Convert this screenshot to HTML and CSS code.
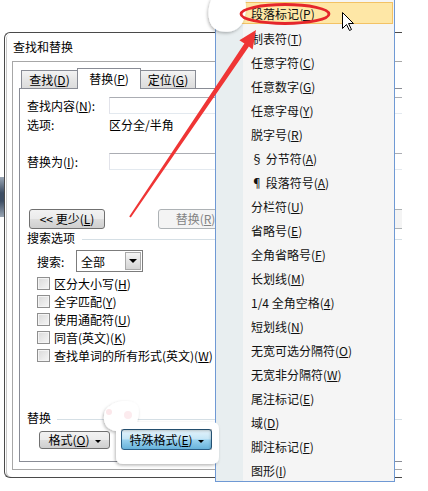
FILE: index.html
```html
<!DOCTYPE html>
<html lang="zh-CN">
<head>
<meta charset="utf-8">
<title>查找和替换</title>
<link rel="stylesheet" href="styles.css">
</head>
<body>
<div class="stage">
  <div class="side-artifact"></div>
  <div class="dialog">
    <div class="titlebar">查找和替换</div>
    <div class="frame">
      <div class="tabs">
        <div class="tab t1">查找(<u>D</u>)</div>
        <div class="tab active">替换(<u>P</u>)</div>
        <div class="tab t3">定位(<u>G</u>)</div>
      </div>
      <div class="panel">
        <div class="row r-find"><span class="lbl">查找内容(<u>N</u>):</span><div class="input"></div></div>
        <div class="row r-opt"><span class="lbl">选项:</span><span>区分全/半角</span></div>
        <div class="row r-repl"><span class="lbl">替换为(<u>I</u>):</span><div class="input"></div></div>
        <div class="btnrow">
          <div class="btn less">&lt;&lt; 更少(<u>L</u>)</div>
          <div class="btn dis b-repl">替换(<u>R</u>)</div>
          <div class="btn dis b-all"></div>
          <div class="btn dis b-next"></div>
        </div>
        <div class="section s-search"><span>搜索选项</span><i class="line"></i></div>
        <div class="search-row">
          <span class="slbl">搜索:</span>
          <div class="select"><span class="sval">全部</span><b class="drop"><i class="tri"></i></b></div>
        </div>
        <div class="checks">
          <div class="chk"><i class="box"></i>区分大小写(<u>H</u>)</div>
          <div class="chk"><i class="box"></i>全字匹配(<u>Y</u>)</div>
          <div class="chk"><i class="box"></i>使用通配符(<u>U</u>)</div>
          <div class="chk"><i class="box"></i>同音(英文)(<u>K</u>)</div>
          <div class="chk"><i class="box"></i>查找单词的所有形式(英文)(<u>W</u>)</div>
        </div>
        <div class="section s-repl"><span>替换</span><i class="line"></i></div>
        <div class="fmt-row">
          <div class="btn fmt">格式(<u>O</u>)<i class="dd"></i></div>
          <div class="btn special">特殊格式(<u>E</u>)<i class="dd"></i></div>
        </div>
      </div>
    </div>
  </div>

  <div class="menu">
    <div class="item hl">段落标记(<u>P</u>)</div>
    <div class="item">制表符(<u>T</u>)</div>
    <div class="item">任意字符(<u>C</u>)</div>
    <div class="item">任意数字(<u>G</u>)</div>
    <div class="item">任意字母(<u>Y</u>)</div>
    <div class="item">脱字号(<u>R</u>)</div>
    <div class="item">§ 分节符(<u>A</u>)</div>
    <div class="item">¶ 段落符号(<u>A</u>)</div>
    <div class="item">分栏符(<u>U</u>)</div>
    <div class="item">省略号(<u>E</u>)</div>
    <div class="item">全角省略号(<u>F</u>)</div>
    <div class="item">长划线(<u>M</u>)</div>
    <div class="item">1/4 全角空格(<u>4</u>)</div>
    <div class="item">短划线(<u>N</u>)</div>
    <div class="item">无宽可选分隔符(<u>O</u>)</div>
    <div class="item">无宽非分隔符(<u>W</u>)</div>
    <div class="item">尾注标记(<u>E</u>)</div>
    <div class="item">域(<u>D</u>)</div>
    <div class="item">脚注标记(<u>F</u>)</div>
    <div class="item">图形(<u>I</u>)</div>
  </div>

  <svg class="annot" width="428" height="491" viewBox="0 0 428 491" xmlns="http://www.w3.org/2000/svg">
    <defs>
      <filter id="sh" x="-30%" y="-30%" width="160%" height="160%">
        <feDropShadow dx="-1" dy="1.5" stdDeviation="1.4" flood-color="#000" flood-opacity="0.28"/>
      </filter>
    </defs>
    <path d="M212,-2 L245,-2 C247,8 246,18 241,25 C235,33 221,34 214,28 C207,22 207,8 212,-2 Z" fill="#fff" filter="url(#sh)"/>
    <path fill-rule="evenodd" fill="#fff" filter="url(#sh)"
      d="M110,406 C116,400 132,399 137,405 C140,409 139,416 137,422 L212,422 Q219,422 219,429 L219,457 Q219,464 212,464 L123,464 Q116,464 116,457 L116,431 C108,430 103,424 104,416 C104,412 106,408 110,406 Z M121,429 L121,450 L212,450 L212,429 Z"/>
    <circle cx="109" cy="412" r="3" fill="#fbe7ea"/>
    <circle cx="128" cy="415" r="4" fill="#fcebee"/>
    <ellipse cx="285" cy="14" rx="44" ry="9.5" fill="none" stroke="#e5262b" stroke-width="2.8"/>
    <polygon fill="#ef3535" points="130.8,217.6 248.9,46.5 252.6,49.6 256,30 239.4,40.3 244.4,43.6 129.2,216.5"/>
    <path d="M342.5,12.5 L342.5,28.5 L346.5,24.5 L349.5,30.5 L351.5,29.5 L348.5,23.5 L353.5,23.5 Z" fill="#fff" stroke="#000" stroke-width="1" stroke-linejoin="round"/>
  </svg>
</div>
</body>
</html>
```

FILE: styles.css
```css
* { box-sizing: border-box; }
html, body { margin: 0; padding: 0; background: #fff; }
body {
  width: 428px;
  height: 491px;
  overflow: hidden;
  font-family: "Noto Sans CJK SC", "Microsoft YaHei", sans-serif;
  font-size: 12px;
  color: #000;
}
u { text-decoration: underline; text-underline-offset: 1px; }

.stage {
  position: relative;
  width: 428px;
  height: 491px;
  padding: 32px 0 0 4px;
}

.side-artifact {
  position: absolute;
  left: 0;
  top: 177px;
  width: 4px;
  height: 40px;
  background: linear-gradient(#9aa6b4, #3d4d63 40%, #3d4d63 60%, #9aa6b4);
}

.dialog {
  width: 398px;
  height: 446px;
  border: 1px solid #4a4a4a;
  border-right: none;
  border-radius: 6px 0 0 6px;
  box-shadow: inset 1px 1px 0 #fff, inset 2px 0 0 #c9c9c9;
  background: #fff;
  overflow: hidden;
  display: flex;
  flex-direction: column;
}
.titlebar {
  height: 28px;
  line-height: 27px;
  padding-left: 8px;
  flex: none;
}
.frame {
  flex: 1;
  width: 430px;
  margin: 0 0 7px 7px;
  border: 1px solid #a7a7a7;
  padding: 0 0 7px 6px;
  display: flex;
  flex-direction: column;
}

.tabs {
  height: 26px;
  flex: none;
  display: flex;
  align-items: flex-end;
  padding-left: 2px;
}
.tab {
  height: 18px;
  border: 1px solid #898c95;
  border-bottom: none;
  background: linear-gradient(#f3f3f3, #e6e6e6 50%, #dcdcdc);
  text-align: center;
  line-height: 17px;
}
.t1 { width: 57px; }
.tab.active {
  position: relative;
  z-index: 2;
  width: 64px;
  height: 21px;
  margin: 0 -1px -1px -1px;
  background: #fff;
  line-height: 19px;
}
.t3 { width: 56px; }

.panel {
  flex: 1;
  border: 1px solid #898c95;
  background: #fff;
  padding: 8px 0 0 7px;
  display: flex;
  flex-direction: column;
}

.row { display: flex; align-items: center; }
.lbl { width: 82px; flex: none; }
.r-find { height: 17px; }
.r-opt { height: 16px; margin-top: 2px; }
.r-repl { height: 17px; margin-top: 21px; }
.input {
  width: 300px;
  height: 17px;
  border: 1px solid;
  border-color: #abadb3 #dbdfe6 #e3e9ef #e2e3ea;
  background: #fff;
}

.btn {
  height: 20px;
  border: 1px solid #707070;
  border-radius: 3px;
  background: linear-gradient(#f2f2f2, #ebebeb 48%, #dddddd 52%, #cfcfcf);
  text-align: center;
  line-height: 18px;
  flex: none;
}
.btn.dis {
  border-color: #adb2b5;
  background: #f4f4f4;
  color: #838383;
}
.btnrow { display: flex; margin-top: 39px; height: 20px; }
.less { margin-left: 2px; width: 76px; }
.b-repl { margin-left: 53px; width: 75px; }
.b-all { margin-left: 6px; width: 75px; }
.b-next { margin-left: 16px; width: 90px; }

.section {
  display: flex;
  align-items: center;
  height: 14px;
  line-height: 14px;
}
.section .line {
  flex: 1;
  height: 1px;
  background: #d5dfe5;
  margin-left: 7px;
  margin-top: 2px;
}
.s-search { margin-top: 2px; }
.s-repl { margin-top: 47px; }
.s-repl .line { margin-left: 6px; }

.search-row {
  display: flex;
  align-items: center;
  margin-top: 5px;
  height: 22px;
  padding-left: 10px;
}
.slbl { width: 39px; flex: none; }
.select {
  width: 67px;
  height: 22px;
  border: 1px solid #7c7c7c;
  background: #fff;
  display: flex;
  align-items: center;
  justify-content: space-between;
  padding: 1px;
}
.sval { padding-left: 3px; }
.drop {
  width: 16px;
  height: 18px;
  border: 1px solid #a9a9a9;
  background: linear-gradient(#f6f6f6, #e4e4e4 50%, #d4d4d4);
  display: flex;
  align-items: center;
  justify-content: center;
}
.tri {
  width: 0;
  height: 0;
  border-left: 4px solid transparent;
  border-right: 4px solid transparent;
  border-top: 4px solid #000;
}

.checks { margin-top: 2px; }
.chk {
  height: 18px;
  display: flex;
  align-items: center;
  padding-left: 10px;
}
.box {
  width: 13px;
  height: 13px;
  border: 1px solid #8f8f8f;
  background: linear-gradient(135deg, #d9d9d9, #f6f6f6);
  box-shadow: inset 0 0 0 1px #f4f4f4;
  margin-right: 4px;
  flex: none;
}

.fmt-row {
  display: flex;
  align-items: center;
  margin-top: 4px;
  height: 21px;
}
.dd {
  display: inline-block;
  width: 0;
  height: 0;
  border-left: 3px solid transparent;
  border-right: 3px solid transparent;
  border-top: 3px solid #000;
  margin-left: 5px;
  vertical-align: 2px;
}
.fmt { margin-left: 12px; width: 71px; height: 18px; line-height: 16px; }
.special {
  margin-left: 11px;
  width: 91px;
  height: 21px;
  line-height: 19px;
  border-color: #2c628b;
  background: linear-gradient(#e5f4fc, #c4e5f6 48%, #98d1ef 52%, #68b3db);
}

.menu {
  position: absolute;
  left: 215px;
  top: -1px;
  width: 180px;
  height: 483px;
  border: 1px solid #6f99d4;
  background: linear-gradient(to right, #e8eef0 0, #e8eef0 27px, #f5f5f5 27px);
  padding-top: 2px;
  z-index: 5;
}
.item {
  height: 24px;
  display: flex;
  align-items: center;
  padding-left: 35px;
  color: #111;
  white-space: nowrap;
}
.item.hl {
  height: 22px;
  margin: 0 1px 2px 1px;
  padding-left: 34px;
  background: #fee7a6;
  box-shadow: inset 0 0 0 1px #f3c264;
}

.annot {
  position: absolute;
  left: 0;
  top: 0;
  z-index: 10;
  pointer-events: none;
}
```
